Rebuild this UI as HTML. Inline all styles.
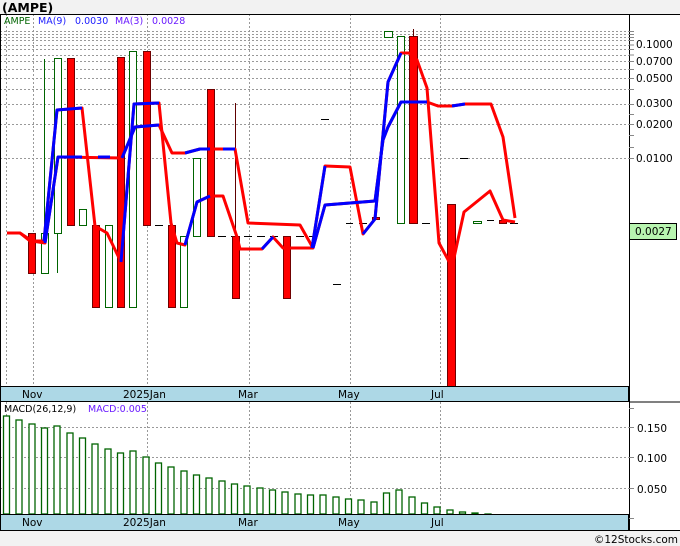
<!DOCTYPE html>
<html><head><meta charset="utf-8"><style>
html,body{margin:0;padding:0;background:#fff}
svg{display:block;font-family:"DejaVu Sans","Liberation Sans",sans-serif}
</style></head><body>
<svg width="680" height="546" viewBox="0 0 680 546" xmlns="http://www.w3.org/2000/svg">
<rect x="0" y="0" width="680" height="546" fill="#fff"/>
<rect x="0" y="0" width="680" height="14" fill="#f2f2f2"/>
<text x="2" y="12" font-size="12.5" font-weight="bold" fill="#000">(AMPE)</text>
<rect x="0" y="531" width="680" height="15" fill="#f2f2f2"/>
<text x="678" y="543" font-size="10.5" text-anchor="end" fill="#000">©12Stocks.com</text>

<g stroke="#999" stroke-width="1" stroke-dasharray="2,2" fill="none">
<line x1="6.5" y1="14" x2="6.5" y2="386"/><line x1="33.5" y1="14" x2="33.5" y2="386"/><line x1="147.5" y1="14" x2="147.5" y2="386"/><line x1="249.5" y1="14" x2="249.5" y2="386"/><line x1="350.5" y1="14" x2="350.5" y2="386"/><line x1="440.5" y1="14" x2="440.5" y2="386"/>
<line x1="0" y1="31.5" x2="629" y2="31.5"/><line x1="0" y1="34.5" x2="629" y2="34.5"/><line x1="0" y1="37.5" x2="629" y2="37.5"/><line x1="0" y1="40.5" x2="629" y2="40.5"/><line x1="0" y1="45.5" x2="629" y2="45.5"/><line x1="0" y1="49.5" x2="629" y2="49.5"/><line x1="0" y1="55.5" x2="629" y2="55.5"/><line x1="0" y1="61.5" x2="629" y2="61.5"/><line x1="0" y1="69.5" x2="629" y2="69.5"/><line x1="0" y1="78.5" x2="629" y2="78.5"/><line x1="0" y1="89.5" x2="629" y2="89.5"/><line x1="0" y1="104.5" x2="629" y2="104.5"/><line x1="0" y1="124.5" x2="629" y2="124.5"/><line x1="0" y1="158.5" x2="629" y2="158.5"/>
<line x1="6.5" y1="402" x2="6.5" y2="514"/><line x1="147.5" y1="402" x2="147.5" y2="514"/><line x1="249.5" y1="402" x2="249.5" y2="514"/><line x1="350.5" y1="402" x2="350.5" y2="514"/><line x1="440.5" y1="402" x2="440.5" y2="514"/>
<line x1="0" y1="427.5" x2="629" y2="427.5"/><line x1="0" y1="457.5" x2="629" y2="457.5"/><line x1="0" y1="488.5" x2="629" y2="488.5"/>
</g>

<text x="4" y="24" font-size="9.5" fill="#006400">AMPE</text>
<text x="38" y="24" font-size="9.5" fill="#2020ff">MA(9)</text>
<text x="75" y="24" font-size="9.5" fill="#2020ff">0.0030</text>
<text x="115" y="24" font-size="9.5" fill="#6a1aff">MA(3)</text>
<text x="152" y="24" font-size="9.5" fill="#6a1aff">0.0028</text>

<g stroke-width="1">
<line x1="44.5" y1="59" x2="44.5" y2="233" stroke="#006400"/>
<line x1="57.5" y1="233" x2="57.5" y2="273" stroke="#006400"/>
<line x1="235.5" y1="103" x2="235.5" y2="236" stroke="#600000"/>
<line x1="413.5" y1="29" x2="413.5" y2="36" stroke="#600000"/>
</g>
<g stroke="#000" stroke-width="1">
<line x1="155" y1="225.5" x2="163" y2="225.5"/>
<line x1="218" y1="236.5" x2="313" y2="236.5" stroke-dasharray="8,5"/>
<line x1="321" y1="119.5" x2="329" y2="119.5"/>
<line x1="333" y1="284.5" x2="341" y2="284.5"/>
<line x1="346" y1="223.5" x2="353" y2="223.5"/>
<line x1="359" y1="223.5" x2="367" y2="223.5"/>
<line x1="422" y1="223.5" x2="430" y2="223.5"/>
<line x1="460" y1="158.5" x2="468" y2="158.5"/>
<line x1="487" y1="220.5" x2="494" y2="220.5"/>
<line x1="510" y1="223.5" x2="518" y2="223.5"/>
</g>
<g fill="#ff0000" stroke="#700000" stroke-width="1">
<rect x="28.5" y="233.5" width="7" height="40"/>
<rect x="67.5" y="58.5" width="7" height="167"/>
<rect x="92.5" y="225.5" width="7" height="82"/>
<rect x="117.5" y="57.5" width="7" height="250"/>
<rect x="143.5" y="51.5" width="7" height="174"/>
<rect x="168.5" y="225.5" width="7" height="82"/>
<rect x="207.5" y="89.5" width="7" height="147"/>
<rect x="232.5" y="236.5" width="7" height="62"/>
<rect x="283.5" y="236.5" width="7" height="62"/>
<rect x="372.5" y="217.5" width="7" height="2"/>
<rect x="409.5" y="36.5" width="8" height="187"/>
<rect x="447.5" y="204.5" width="8" height="182"/>
<rect x="499.5" y="220.5" width="7" height="3"/>
</g>
<g fill="#fff" stroke="#006400" stroke-width="1">
<rect x="41.5" y="233.5" width="7" height="40"/>
<rect x="54.5" y="58.5" width="7" height="175"/>
<rect x="79.5" y="209.5" width="7" height="16"/>
<rect x="105.5" y="225.5" width="7" height="82"/>
<rect x="129.5" y="51.5" width="7" height="256"/>
<rect x="180.5" y="236.5" width="7" height="71"/>
<rect x="193.5" y="158.5" width="7" height="78"/>
<rect x="384.5" y="31.5" width="8" height="6"/>
<rect x="397.5" y="36.5" width="7" height="187"/>
<rect x="473.5" y="221.5" width="8" height="2"/>
</g>

<g fill="none" stroke-width="3" stroke-linejoin="round">
<polyline stroke="#ff0000" points="7,233 20,233 30,241 44,241 57,110 82,108 95,226 107,233 121,262 134,104 159,103 171,223 177,243 185,245 197,202 210,196 223,196 237,237 240,249 262,249 273,237 283,248 312,248 325,166 350,167 363,234 375,219 388,82 401,53 409,53 417,60 427,88 439,243 452,267 464,212 490,191 503,220 515,222"/>
<polyline stroke="#ff0000" points="7,233 20,233 32,241 45,243 58,157 122,158 135,127 159,125 172,153 185,153 200,149 235,149 248,223 300,225 313,248 325,205 375,201 383,140 388,127 401,102 427,102 438,106 452,106 465,104 491,104 503,137 515,218"/>
<g stroke="#0000ff">
<polyline points="44,241 57,110 82,108"/>
<polyline points="121,262 134,104 159,103"/>
<polyline points="185,245 197,202 210,196"/>
<polyline points="262,249 273,237"/>
<polyline points="312,248 325,166"/>
<polyline points="363,234 375,219 388,82 401,53"/>
<polyline points="45,243 58,157 82,157"/>
<polyline points="122,158 135,127 159,125"/>
<polyline points="185,153 200,149 210,149"/>
<polyline points="313,248 325,205 375,201 383,140 388,127 401,102 427,102"/>
<polyline points="452,106 465,104"/>
<polyline points="98,157 110,157"/>
<polyline points="223,149 235,149"/>
</g>
</g>

<g fill="#fff" stroke="#006400" stroke-width="1.3">
<rect x="3.5" y="416" width="6" height="98"/><rect x="16" y="420" width="6" height="94"/><rect x="29" y="424" width="6" height="90"/><rect x="41.5" y="428" width="6" height="86"/><rect x="54" y="426" width="6" height="88"/><rect x="67" y="433" width="6" height="81"/><rect x="79.5" y="438" width="6" height="76"/><rect x="92" y="444" width="6" height="70"/><rect x="105" y="449" width="6" height="65"/><rect x="117.5" y="453" width="6" height="61"/><rect x="130" y="451" width="6" height="63"/><rect x="143" y="457" width="6" height="57"/><rect x="155.5" y="463" width="6" height="51"/><rect x="168" y="467" width="6" height="47"/><rect x="181" y="471" width="6" height="43"/><rect x="193.5" y="475" width="6" height="39"/><rect x="206" y="478" width="6" height="36"/><rect x="219" y="481" width="6" height="33"/><rect x="231.5" y="484" width="6" height="30"/><rect x="244" y="486" width="6" height="28"/><rect x="257" y="488" width="6" height="26"/><rect x="269.5" y="490" width="6" height="24"/><rect x="282" y="492" width="6" height="22"/><rect x="295" y="494" width="6" height="20"/><rect x="307.5" y="495" width="6" height="19"/><rect x="320" y="495" width="6" height="19"/><rect x="333" y="497" width="6" height="17"/><rect x="345.5" y="499" width="6" height="15"/><rect x="358" y="500" width="6" height="14"/><rect x="371" y="502" width="6" height="12"/><rect x="383.5" y="493" width="6" height="21"/><rect x="396" y="490" width="6" height="24"/><rect x="409" y="497" width="6" height="17"/><rect x="421.5" y="503" width="6" height="11"/><rect x="434" y="507" width="6" height="7"/><rect x="447" y="510" width="6" height="4"/><rect x="459.5" y="512" width="6" height="2"/><rect x="472" y="513" width="6" height="1"/><rect x="485" y="514" width="6" height="0.5"/>
</g>
<text x="4" y="412" font-size="9.5" fill="#000">MACD(26,12,9)</text>
<text x="88" y="412" font-size="9.5" fill="#6a1aff">MACD:0.005</text>

<rect x="0.5" y="386.5" width="628" height="15" fill="#add8e6" stroke="#000"/>
<rect x="0.5" y="514.5" width="628" height="16" fill="#add8e6" stroke="#000"/>
<g font-size="10.5" fill="#000">
<text x="22" y="398">Nov</text><text x="123" y="398">2025Jan</text><text x="238" y="398">Mar</text><text x="338" y="398">May</text><text x="431" y="398">Jul</text>
<text x="22" y="526">Nov</text><text x="123" y="526">2025Jan</text><text x="238" y="526">Mar</text><text x="338" y="526">May</text><text x="431" y="526">Jul</text>
</g>

<line x1="0" y1="14.5" x2="680" y2="14.5" stroke="#000"/>
<line x1="0.5" y1="14" x2="0.5" y2="531" stroke="#000"/>
<line x1="629.5" y1="14" x2="629.5" y2="531" stroke="#000"/>
<line x1="629" y1="402" x2="680" y2="402" stroke="#000"/>
<line x1="0" y1="530.5" x2="680" y2="530.5" stroke="#000"/>

<g stroke="#888" stroke-width="1">
<line x1="629" y1="31.5" x2="634" y2="31.5"/><line x1="629" y1="34.5" x2="634" y2="34.5"/><line x1="629" y1="37.5" x2="634" y2="37.5"/><line x1="629" y1="40.5" x2="634" y2="40.5"/><line x1="629" y1="45" x2="634" y2="45"/><line x1="629" y1="49.5" x2="634" y2="49.5"/><line x1="629" y1="55" x2="634" y2="55"/><line x1="629" y1="61.5" x2="634" y2="61.5"/><line x1="629" y1="69.5" x2="634" y2="69.5"/><line x1="629" y1="78.5" x2="634" y2="78.5"/><line x1="629" y1="89.5" x2="634" y2="89.5"/><line x1="629" y1="104.5" x2="634" y2="104.5"/><line x1="629" y1="114.5" x2="634" y2="114.5"/><line x1="629" y1="124.5" x2="634" y2="124.5"/><line x1="629" y1="135.5" x2="634" y2="135.5"/><line x1="629" y1="147.5" x2="634" y2="147.5"/><line x1="629" y1="158.5" x2="634" y2="158.5"/>
<line x1="629" y1="427.5" x2="634" y2="427.5"/><line x1="629" y1="457.5" x2="634" y2="457.5"/><line x1="629" y1="488.5" x2="634" y2="488.5"/><line x1="629" y1="408.5" x2="634" y2="408.5"/><line x1="629" y1="518.5" x2="634" y2="518.5"/>
</g>
<g font-size="10.5" fill="#000">
<text x="636" y="48">0.1000</text><text x="636" y="65">0.0700</text><text x="636" y="82">0.0500</text><text x="636" y="107">0.0300</text><text x="636" y="128">0.0200</text><text x="636" y="162">0.0100</text>
<text x="637" y="432">0.150</text><text x="637" y="462">0.100</text><text x="637" y="493">0.050</text>
</g>
<rect x="629.5" y="223.5" width="47" height="16" fill="#b8f5b0" stroke="#000"/>
<text x="635" y="235" font-size="10.5" fill="#000">0.0027</text>
</svg>
</body></html>
